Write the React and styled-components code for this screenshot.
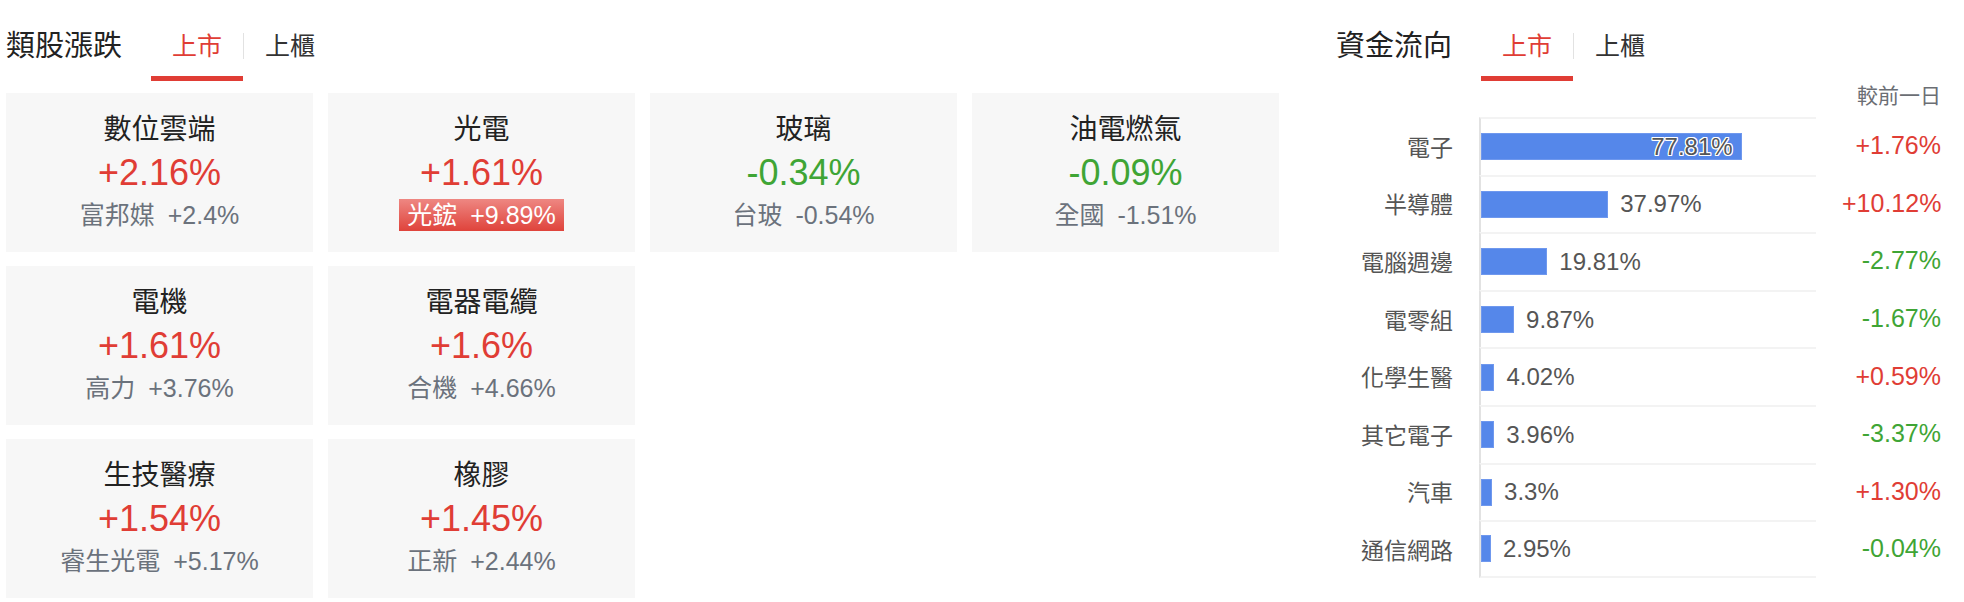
import React from 'react'
import styled, { createGlobalStyle } from 'styled-components'

const GlobalStyle = createGlobalStyle`
    body {
        margin: 0;
        background: #fff;
        font-family: "Liberation Sans", "Noto Sans CJK TC", sans-serif;
    }
`

const UP = '#e03d35'
const DOWN = '#3fa535'

const Page = styled.div`
    display: flex;
    align-items: flex-start;
    padding-left: 6px;
`

const LeftPanel = styled.section`
    width: 1273px;
`

const RightPanel = styled.section`
    width: 605px;
    margin-left: 57px;
`

const Header = styled.div`
    display: flex;
    align-items: flex-start;
    padding-top: 26px;
    height: 55px;
`

const Title = styled.h2`
    margin: 0 29px 0 0;
    font-size: 29px;
    line-height: 40px;
    font-weight: 400;
    color: #222;
`

const Tabs = styled.div`
    display: flex;
    align-items: flex-start;
`

const Tab = styled.div`
    padding: 0 21px 10px;
    font-size: 25px;
    line-height: 40px;
    color: ${p => (p.$active ? UP : '#333')};
    border-bottom: 5px solid ${p => (p.$active ? UP : 'transparent')};
`

const TabDivider = styled.span`
    width: 1px;
    height: 26px;
    margin-top: 7px;
    background: #e2e2e2;
`

const CardRows = styled.div`
    display: flex;
    flex-direction: column;
    gap: 14px;
    margin-top: 12px;
`

const CardRow = styled.div`
    display: grid;
    grid-template-columns: repeat(4, 307px);
    column-gap: 15px;
`

const Card = styled.div`
    height: 159px;
    box-sizing: border-box;
    padding-top: 18px;
    background: #f7f7f7;
    display: flex;
    flex-direction: column;
    align-items: center;
`

const CardName = styled.div`
    font-size: 28px;
    line-height: 38px;
    color: #222;
`

const CardChange = styled.div`
    margin-top: 2px;
    font-size: 36px;
    line-height: 44px;
    color: ${p => p.$color};
`

const Leader = styled.div`
    margin-top: 4px;
    padding: 0 8px;
    font-size: 25px;
    line-height: 32px;
    color: ${p => (p.$hot ? '#fff' : '#6b727c')};
    background: ${p => (p.$hot ? 'linear-gradient(#ee8782, #df433b)' : 'none')};
`

const LeaderChange = styled.span`
    margin-left: 13px;
`

const Caption = styled.div`
    height: 36px;
    line-height: 30px;
    text-align: right;
    font-size: 21px;
    color: #6b6e74;
`

const FlowRow = styled.div`
    display: grid;
    grid-template-columns: 117px 337px 99px;
    column-gap: 26px;
    height: 57.6px;
`

const FlowLabel = styled.div`
    align-self: center;
    text-align: right;
    font-size: 23px;
    color: #555;
    white-space: nowrap;
`

const BarCell = styled.div`
    box-sizing: border-box;
    display: flex;
    align-items: center;
    border-left: 2px solid #e2e2e2;
    border-top: 2px solid #f3f3f3;
    border-bottom: ${p => (p.$last ? '2px solid #f3f3f3' : 'none')};
`

const Bar = styled.div`
    position: relative;
    flex: none;
    height: 27px;
    background: #5587ea;
    box-shadow: inset 0 0 0 1px #6f98ee;
`

const BarValue = styled.span`
    margin-left: 12px;
    font-size: 24px;
    color: #555;
`

const BarValueInside = styled.span`
    position: absolute;
    right: 9px;
    top: 50%;
    transform: translateY(-50%);
    font-size: 24px;
    color: #555;
    text-shadow: 1px 0 0 #fff, -1px 0 0 #fff, 0 1px 0 #fff, 0 -1px 0 #fff,
        1px 1px 0 #fff, -1px -1px 0 #fff, 1px -1px 0 #fff, -1px 1px 0 #fff;
`

const FlowChange = styled.div`
    align-self: center;
    text-align: right;
    font-size: 25px;
    white-space: nowrap;
    color: ${p => p.$color};
`

const sectorRows = [
    [
        { name: '數位雲端', change: '+2.16%', stock: '富邦媒', stockChange: '+2.4%' },
        { name: '光電', change: '+1.61%', stock: '光鋐', stockChange: '+9.89%', hot: true },
        { name: '玻璃', change: '-0.34%', stock: '台玻', stockChange: '-0.54%' },
        { name: '油電燃氣', change: '-0.09%', stock: '全國', stockChange: '-1.51%' }
    ],
    [
        { name: '電機', change: '+1.61%', stock: '高力', stockChange: '+3.76%' },
        { name: '電器電纜', change: '+1.6%', stock: '合機', stockChange: '+4.66%' }
    ],
    [
        { name: '生技醫療', change: '+1.54%', stock: '睿生光電', stockChange: '+5.17%' },
        { name: '橡膠', change: '+1.45%', stock: '正新', stockChange: '+2.44%' }
    ]
]

const flows = [
    { name: '電子', share: 77.81, change: '+1.76%' },
    { name: '半導體', share: 37.97, change: '+10.12%' },
    { name: '電腦週邊', share: 19.81, change: '-2.77%' },
    { name: '電零組', share: 9.87, change: '-1.67%' },
    { name: '化學生醫', share: 4.02, change: '+0.59%' },
    { name: '其它電子', share: 3.96, change: '-3.37%' },
    { name: '汽車', share: 3.3, change: '+1.30%' },
    { name: '通信網路', share: 2.95, change: '-0.04%' }
]

const colorOf = value => (value.startsWith('-') ? DOWN : UP)

const MarketTabs = () => (
    <Tabs>
        <Tab $active>上市</Tab>
        <TabDivider />
        <Tab>上櫃</Tab>
    </Tabs>
)

const SectorCard = ({ sector }) => (
    <Card>
        <CardName>{sector.name}</CardName>
        <CardChange $color={colorOf(sector.change)}>{sector.change}</CardChange>
        <Leader $hot={sector.hot}>
            {sector.stock}
            <LeaderChange>{sector.stockChange}</LeaderChange>
        </Leader>
    </Card>
)

// wide bars carry their value inside, short ones print it after the bar
const FlowItem = ({ flow, last }) => {
    const inside = flow.share > 50
    return (
        <FlowRow>
            <FlowLabel>{flow.name}</FlowLabel>
            <BarCell $last={last}>
                <Bar style={{ width: `${flow.share}%` }}>
                    {inside && <BarValueInside>{flow.share}%</BarValueInside>}
                </Bar>
                {!inside && <BarValue>{flow.share}%</BarValue>}
            </BarCell>
            <FlowChange $color={colorOf(flow.change)}>{flow.change}</FlowChange>
        </FlowRow>
    )
}

export default function App() {
    return (
        <>
            <GlobalStyle />
            <Page>
                <LeftPanel>
                    <Header>
                        <Title>類股漲跌</Title>
                        <MarketTabs />
                    </Header>
                    <CardRows>
                        {sectorRows.map((row, i) => (
                            <CardRow key={i}>
                                {row.map(sector => (
                                    <SectorCard key={sector.name} sector={sector} />
                                ))}
                            </CardRow>
                        ))}
                    </CardRows>
                </LeftPanel>
                <RightPanel>
                    <Header>
                        <Title>資金流向</Title>
                        <MarketTabs />
                    </Header>
                    <Caption>較前一日</Caption>
                    {flows.map((flow, i) => (
                        <FlowItem key={flow.name} flow={flow} last={i === flows.length - 1} />
                    ))}
                </RightPanel>
            </Page>
        </>
    )
}
